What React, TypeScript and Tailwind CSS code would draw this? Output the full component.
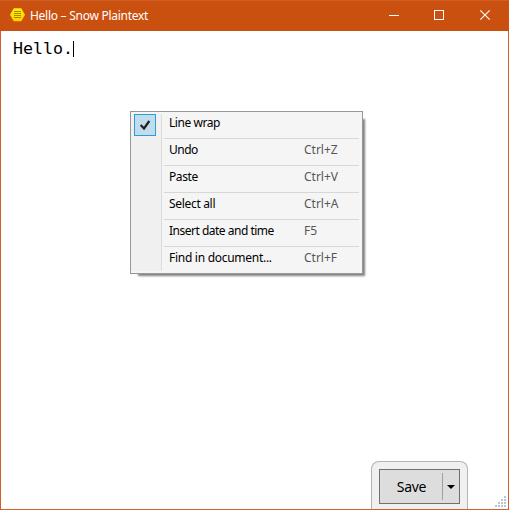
type Item = { label: string; shortcut?: string; spacing: string; checked?: boolean };

const items: Item[] = [
  { label: 'Line wrap', spacing: 'tracking-[-0.45px]', checked: true },
  { label: 'Undo', shortcut: 'Ctrl+Z', spacing: 'tracking-[-0.5px]' },
  { label: 'Paste', shortcut: 'Ctrl+V', spacing: 'tracking-[-0.4px]' },
  { label: 'Select all', shortcut: 'Ctrl+A', spacing: 'tracking-[-0.32px]' },
  { label: 'Insert date and time', shortcut: 'F5', spacing: 'tracking-[-0.5px]' },
  { label: 'Find in document...', shortcut: 'Ctrl+F', spacing: 'tracking-[-0.28px]' },
];

function AppIcon() {
  return (
    <svg width="15" height="14" viewBox="0 0 15 14" className="mb-[2px] shrink-0">
      <defs>
        <linearGradient id="hex" x1="0" y1="0" x2="0" y2="1">
          <stop offset="0" stopColor="#fff200" />
          <stop offset="1" stopColor="#ffd000" />
        </linearGradient>
      </defs>
      <path d="M3.8 .2h7.4L15 6.7l-3.8 6.6H3.8L0 6.7z" fill="url(#hex)" />
      <path d="M4 3.5h7M4 5.5h7M4 7.5h7M4 9.5h7" stroke="#a58a00" strokeWidth="1" />
    </svg>
  );
}

function TitleBar() {
  return (
    <header className="flex h-[31px] items-center border-t border-[#cf5f27] bg-[#ca5010] pl-[10px] text-white">
      <AppIcon />
      <h1 className="ml-[5px] grow whitespace-nowrap text-[12px] leading-4 tracking-[-0.27px]">Hello – Snow Plaintext</h1>
      <svg width="138" height="30" viewBox="0 0 138 30" fill="none" stroke="#fff" className="shrink-0">
        <path d="M18 14.5h10" />
        <rect x="63.5" y="9.5" width="9" height="9" />
        <path d="M109.3 9.3l9.4 9.4M118.7 9.3l-9.4 9.4" strokeWidth="1.1" />
      </svg>
    </header>
  );
}

function ContextMenu() {
  return (
    <div className="absolute left-[130px] top-[111px] h-[163px] w-[233px] border border-[#979797] bg-[#f5f5f5] shadow-[5px_5px_2px_-3px_#808080]">
      <div className="absolute bottom-[2px] left-0 top-[2px] w-[31px] border-r border-[#dcdcdc] bg-[#f0f0f0]" />
      <ul className="relative">
        {items.map((item, i) => (
          <li key={item.label} className="flex text-[12px] leading-[22px] text-black">
            <div className="w-[33px] shrink-0 pl-[3px] pt-[2px]">
              {item.checked && (
                <div className="h-[22px] w-[22px] border border-[#26a0da] bg-[#c1dcea]">
                  <svg width="20" height="20" viewBox="0 0 20 20">
                    <path d="M5.7 10l3.3 3.5 5.3-7.5" fill="none" stroke="#212121" strokeWidth="2.2" />
                  </svg>
                </div>
              )}
            </div>
            <div className={`flex h-[27px] w-[195px] pl-[5px] ${i < items.length - 1 ? 'border-b border-[#d7d7d7]' : ''}`}>
              <span className={`w-[135px] whitespace-nowrap ${item.spacing}`}>{item.label}</span>
              <span className="whitespace-nowrap text-[#555]">{item.shortcut}</span>
            </div>
          </li>
        ))}
      </ul>
    </div>
  );
}

function ResizeGrip() {
  const dots = [[9, 0], [6, 3], [9, 3], [3, 6], [6, 6], [9, 6], [0, 9], [3, 9], [6, 9], [9, 9]];
  return (
    <svg width="11" height="11" className="mb-[2px] ml-auto mr-[2px]">
      {dots.map(([x, y]) => (
        <rect key={`${x}-${y}`} x={x} y={y} width="2" height="2" fill="#bcc5d6" />
      ))}
    </svg>
  );
}

export default function App() {
  return (
    <main className="relative flex h-[510px] w-[509px] flex-col overflow-hidden bg-white font-['Noto_Sans',sans-serif]">
      <TitleBar />
      <div className="flex grow flex-col border-x border-b border-[#d05f2a]">
        <div className="flex grow items-start pl-[12px] pt-[9px]">
          <p className="w-[60px] origin-left scale-x-[1.107] whitespace-nowrap font-['DejaVu_Sans_Mono',monospace] text-[15px] leading-[18px] text-black">Hello.</p>
          <span className="mt-px h-[16px] w-px bg-black" />
        </div>
        <footer className="flex items-end">
          <div className="ml-[370px] h-[48px] w-[97px] rounded-t-[8px] border border-b-0 border-[#b4b4b4] bg-[#f0f0f0] pl-[7px] pt-[7px]">
            <button className="flex h-[35px] w-[81px] items-center border border-[#707070] bg-[#dddddd] text-[14px] text-black">
              <span className="w-[62px] pl-[1px] text-center tracking-[-0.3px]">Save</span>
              <span className="h-[27px] w-px bg-[#a0a0a0]" />
              <svg width="16" height="8" viewBox="0 0 16 8">
                <path d="M4 2h8L8 6z" fill="#000" />
              </svg>
            </button>
          </div>
          <ResizeGrip />
        </footer>
      </div>
      <ContextMenu />
    </main>
  );
}
